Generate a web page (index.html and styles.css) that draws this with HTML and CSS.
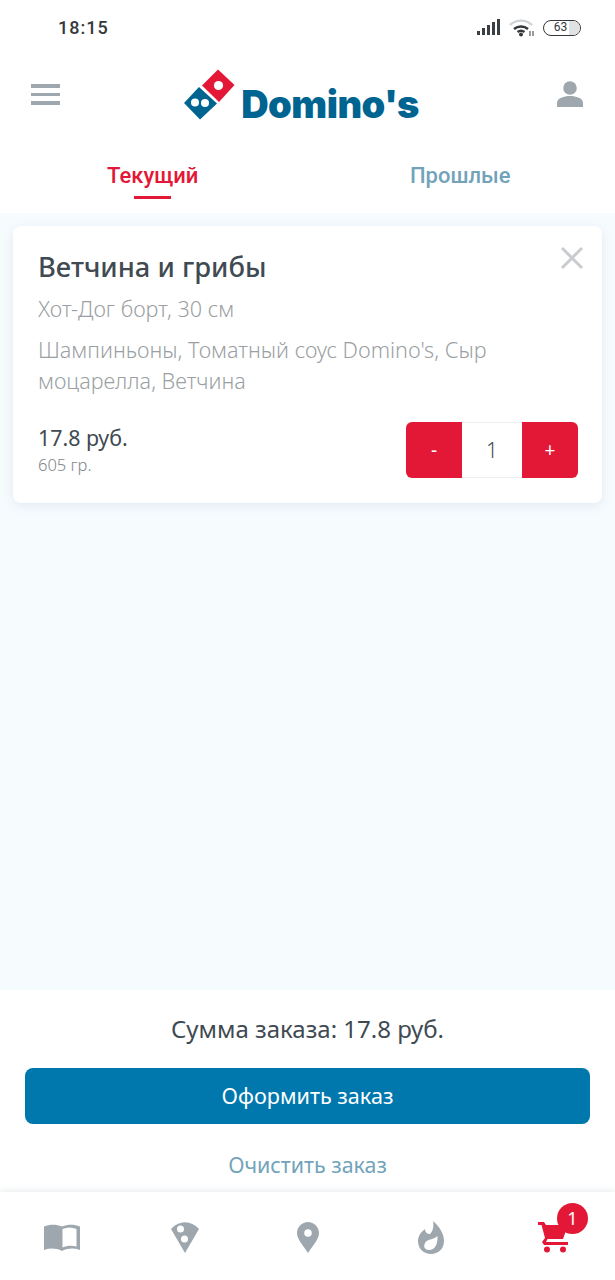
FILE: index.html
```html
<!DOCTYPE html>
<html lang="ru">
<head>
    <meta charset="UTF-8">
    <meta name="viewport" content="width=device-width, initial-scale=1.0">
    <title>Domino's - Корзина</title>
    <link rel="stylesheet" href="styles.css">
</head>
<body>
    <div class="status-bar">
        <span class="status-time">18:15</span>
        <div class="status-icons">
            <svg class="icon-signal" width="24" height="17" viewBox="0 0 24 17">
                <rect x="0" y="12" width="3" height="4" fill="#3a3f44"/>
                <rect x="5" y="9" width="3" height="7" fill="#3a3f44"/>
                <rect x="10" y="6" width="3" height="10" fill="#3a3f44"/>
                <rect x="15" y="3" width="3" height="13" fill="#3a3f44"/>
                <rect x="20" y="0" width="3" height="16" fill="#3a3f44"/>
            </svg>
            <svg class="icon-wifi" width="26" height="19" viewBox="0 0 26 19">
                <path d="M1 7 A16 16 0 0 1 23 7" fill="none" stroke="#cfd2d4" stroke-width="2.4"/>
                <path d="M5 11 A11 11 0 0 1 19 11" fill="none" stroke="#33383c" stroke-width="2.4"/>
                <path d="M8.500 14 A6 6 0 0 1 15.500 14" fill="none" stroke="#33383c" stroke-width="2.4"/>
                <circle cx="12" cy="16.500" r="2" fill="#33383c"/>
                <path d="M21 13v5M24 13v5" stroke="#55595d" stroke-width="1.2"/>
            </svg>
            <div class="battery"><div class="battery-fill"></div><span class="battery-num">63</span></div>
        </div>
    </div>

    <header class="top-bar">
        <div class="burger"><i></i><i></i><i></i></div>
        <div class="logo">
            <svg width="52" height="52" viewBox="0 0 52 52">
                <path d="M34 0.500 L50.500 16 L35 33 L18 16.500 Z" fill="#e31837"/>
                <circle cx="34.500" cy="16.500" r="4.600" fill="#fff"/>
                <path d="M15 18 L33 34.500 L16 50.500 L0 34 Z" fill="#006491"/>
                <circle cx="11" cy="33.500" r="4" fill="#fff"/>
                <circle cx="21" cy="34" r="4" fill="#fff"/>
            </svg>
            <span class="logo-text">Domino's</span>
        </div>
        <svg class="person" width="26" height="26" viewBox="0 0 26 26">
            <circle cx="13" cy="7" r="6.800" fill="#9ea7ad"/>
            <path d="M0 26 V22 C0 17 7 15 13 15 S26 17 26 22 V26 Z" fill="#9ea7ad"/>
        </svg>
    </header>

    <nav class="tabs">
        <div class="tab tab-active">Текущий</div>
        <div class="tab">Прошлые</div>
    </nav>

    <main class="content">
        <div class="card">
            <svg class="card-close" width="24" height="24" viewBox="0 0 24 24">
                <path d="M2 2 L22 22 M22 2 L2 22" stroke="#c9cccf" stroke-width="3"/>
            </svg>
            <h2 class="card-title">Ветчина и грибы</h2>
            <p class="card-size">Хот-Дог борт, 30 см</p>
            <p class="card-desc">Шампиньоны, Томатный соус Domino's, Сыр моцарелла, Ветчина</p>
            <div class="card-bottom">
                <div>
                    <div class="price">17.8 руб.</div>
                    <div class="weight">605 гр.</div>
                </div>
                <div class="stepper">
                    <div class="step-btn">-</div>
                    <div class="step-val">1</div>
                    <div class="step-btn">+</div>
                </div>
            </div>
        </div>
    </main>

    <section class="summary">
        <div class="summary-total">Сумма заказа: 17.8 руб.</div>
        <div class="checkout">Оформить заказ</div>
        <div class="clear-link">Очистить заказ</div>
    </section>

    <footer class="bottom-nav">
        <div class="nav-item">
            <svg width="36" height="27" viewBox="0 0 36 27">
                <path d="M0 2.500 C6 0 12 0 18 2.500 C24 0 30 0 36 2.500 V26 C30 24 24 24 18 27 C12 24 6 24 0 26 Z" fill="#9ea7ad"/>
                <path d="M18.500 5 C23 3 28 3 32.500 5 V22.500 C28 21.500 23 21.500 18.500 23.500 Z" fill="#fff"/>
            </svg>
        </div>
        <div class="nav-item">
            <svg width="28" height="31" viewBox="0 0 28 31">
                <path d="M0 7 C8 -2 20 -2 28 7 L14 31 Z" fill="#9ea7ad"/>
                <circle cx="9.500" cy="7" r="3.500" fill="#fff"/>
                <circle cx="13.500" cy="17" r="3.500" fill="#fff"/>
            </svg>
        </div>
        <div class="nav-item">
            <svg width="22" height="31" viewBox="0 0 22 31">
                <path d="M11 0 C5 0 0 5 0 11 C0 18 7 24 11 31 C15 24 22 18 22 11 C22 5 17 0 11 0 Z" fill="#9ea7ad"/>
                <circle cx="11" cy="11" r="3.800" fill="#fff"/>
            </svg>
        </div>
        <div class="nav-item">
            <svg width="26" height="33" viewBox="0 0 26 33">
                <path d="M15 0 C23 7 26 14 26 20 C26 28 20 33 13 33 C6 33 0 28 0 20 C0 15 3 11 7 8 C7 11 9 13 12 13 C15 10 16 5 15 0 Z" fill="#9ea7ad"/>
                <path d="M19.500 15 C20 23 17 29 11 29 C7 29 5 26 7 22 C9 18 15 19 19.500 15 Z" fill="#fff"/>
            </svg>
        </div>
        <div class="nav-item nav-cart">
            <svg width="31" height="31" viewBox="0 0 31 31">
                <path d="M0 0 H6 L8 3 H30 L25 17 H9.500 L8 20 H30 V23 H6 L4 20 L7 16 L3.500 3 H0 Z" fill="#e31837"/>
                <circle cx="9" cy="27.500" r="3" fill="#e31837"/>
                <circle cx="25" cy="27.500" r="3" fill="#e31837"/>
            </svg>
            <span class="cart-badge">1</span>
        </div>
    </footer>
</body>
</html>
```

FILE: styles.css
```css
* {
    box-sizing: border-box;
}
body {
    margin: 0;
    width: 615px;
    height: 1280px;
    overflow: hidden;
    display: flex;
    flex-direction: column;
    background-color: #fff;
    font-family: "Noto Sans", "Open Sans", sans-serif;
    color: #3f4a52;
}

/* status bar */
.status-bar {
    height: 55px;
    flex: none;
    display: flex;
    justify-content: space-between;
    align-items: center;
    padding: 0 34px 0 58px;
}
.status-time {
    font-family: Roboto, sans-serif;
    font-weight: 500;
    font-size: 18px;
    letter-spacing: 1px;
    color: #33383c;
}
.status-icons {
    display: flex;
    align-items: center;
    gap: 8px;
}
.battery {
    position: relative;
    width: 38px;
    height: 16px;
    border: 1.5px solid #33383c;
    border-radius: 8px;
    overflow: hidden;
    text-align: center;
}
.battery-fill {
    position: absolute;
    right: 0;
    top: 0;
    bottom: 0;
    width: 11px;
    background-color: #e0e2e3;
}
.battery-num {
    position: relative;
    display: block;
    padding-right: 3px;
    font-family: Roboto, sans-serif;
    font-size: 12px;
    line-height: 13px;
    color: #33383c;
}

/* header */
.top-bar {
    height: 95px;
    flex: none;
    display: flex;
    justify-content: space-between;
    align-items: flex-start;
    padding: 14px 32px 0 31px;
}
.burger {
    width: 29px;
    margin-top: 15px;
    display: flex;
    flex-direction: column;
    gap: 5px;
}
.burger i {
    display: block;
    height: 3.5px;
    background-color: #9ea7ad;
}
.logo {
    display: flex;
    align-items: flex-start;
    gap: 5px;
    margin-right: 14px;
}
.logo-text {
    font-family: Inter, sans-serif;
    font-weight: 900;
    font-size: 38px;
    line-height: 44px;
    margin-top: 13px;
    letter-spacing: -0.5px;
    white-space: nowrap;
    color: #006491;
}
.person {
    margin-top: 12px;
}

/* tabs */
.tabs {
    height: 63px;
    flex: none;
    display: flex;
    padding: 0 2px 0 0;
}
.tab {
    flex: 1;
    position: relative;
    text-align: center;
    font-family: Roboto, sans-serif;
    font-weight: 500;
    font-size: 22px;
    line-height: 52px;
    color: #72a3ba;
}
.tab-active {
    padding-right: 2px;
    color: #e31837;
}
.tab-active::after {
    content: "";
    position: absolute;
    left: 50%;
    bottom: 14px;
    width: 37px;
    height: 3px;
    margin-left: -20px;
    background-color: #e31837;
}

/* cart list */
.content {
    flex: 1;
    background-color: #f6fbfe;
    padding: 13px 13px 0;
}
.card {
    position: relative;
    height: 277px;
    padding: 22px 24px 0 25px;
    background-color: #fff;
    border-radius: 8px;
    box-shadow: 0 3px 12px rgba(60, 100, 130, 0.1);
}
.card-close {
    position: absolute;
    right: 18px;
    top: 20px;
}
.card-title {
    margin: 0;
    font-size: 27.3px;
    line-height: 38px;
    font-weight: 500;
    color: #3f4a52;
}
.card-size {
    margin: 8px 0 0;
    font-size: 21.6px;
    font-weight: 300;
    line-height: 30px;
    color: #9b9fa3;
}
.card-desc {
    margin: 10px 0 0;
    font-size: 21.6px;
    font-weight: 300;
    line-height: 31px;
    color: #9b9fa3;
}
.card-bottom {
    margin-top: 26px;
    display: flex;
    justify-content: space-between;
    align-items: center;
}
.price {
    font-size: 21.4px;
    line-height: 30px;
    color: #3f4a52;
}
.weight {
    font-size: 16.5px;
    line-height: 24px;
    font-weight: 300;
    color: #7f868b;
}
.stepper {
    display: flex;
    height: 56px;
}
.step-btn {
    width: 56px;
    text-align: center;
    line-height: 56px;
    font-size: 19px;
    color: #fff;
    background-color: #e31837;
}
.step-btn:first-child {
    border-radius: 6px 0 0 6px;
}
.step-btn:last-child {
    border-radius: 0 6px 6px 0;
}
.step-val {
    width: 60px;
    text-align: center;
    line-height: 54px;
    font-size: 21px;
    font-weight: 300;
    border-top: 1px solid #eee;
    border-bottom: 1px solid #eee;
}

/* order summary */
.summary {
    height: 202px;
    flex: none;
    padding: 0 25px 0 25px;
    text-align: center;
}
.summary-total {
    padding-top: 19px;
    font-size: 24px;
    line-height: 40px;
    color: #3f4a52;
}
.checkout {
    margin-top: 19px;
    height: 56px;
    line-height: 56px;
    border-radius: 8px;
    background-color: #0078ae;
    color: #fff;
    font-size: 21.6px;
}
.clear-link {
    margin-top: 23px;
    font-size: 21.4px;
    line-height: 36px;
    color: #72a3ba;
}

/* bottom navigation */
.bottom-nav {
    height: 88px;
    flex: none;
    display: flex;
    padding-top: 3px;
    background-color: #fff;
    box-shadow: 0 -2px 6px rgba(60, 80, 100, 0.1);
}
.nav-item {
    flex: 1;
    display: flex;
    justify-content: center;
    align-items: center;
}
.nav-cart {
    position: relative;
}
.cart-badge {
    position: absolute;
    left: 65px;
    top: 8px;
    width: 31px;
    height: 31px;
    border-radius: 50%;
    background-color: #e31837;
    color: #fff;
    font-size: 18px;
    line-height: 31px;
    text-align: center;
}
```
